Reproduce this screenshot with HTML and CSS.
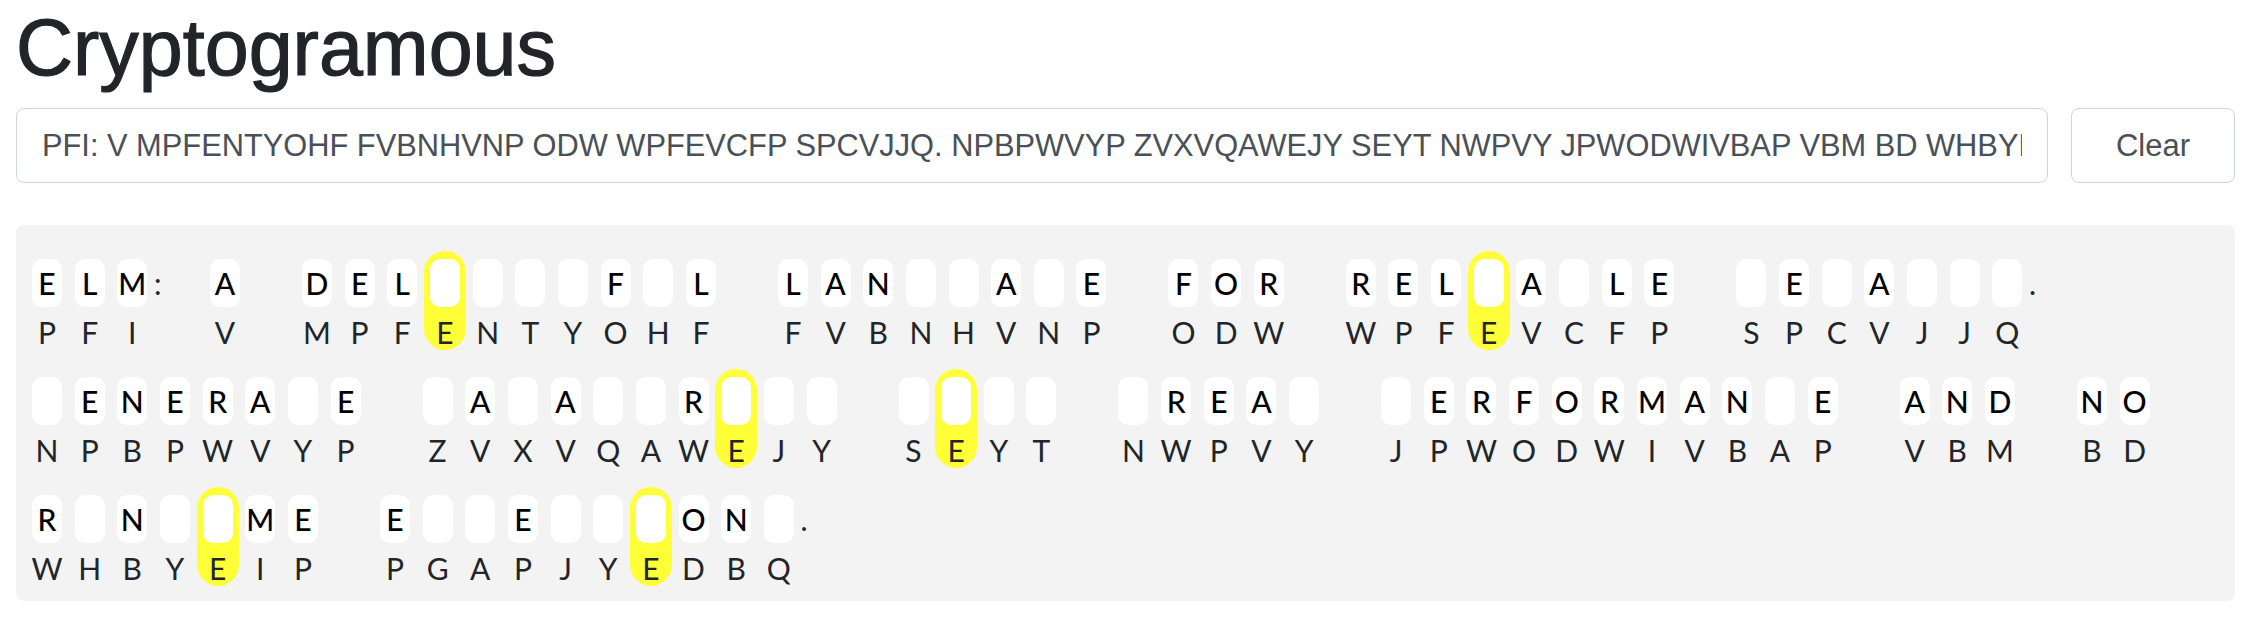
FILE: index.html
```html
<!DOCTYPE html>
<html lang="en">
<head>
<meta charset="utf-8">
<title>Cryptogramous</title>
<link rel="stylesheet" href="styles.css">
</head>
<body>
<div class="page">
  <h1 class="title">Cryptogramous</h1>
  <div class="controls">
    <input class="cipher-input" type="text" value="PFI: V MPFENTYOHF FVBNHVNP ODW WPFEVCFP SPCVJJQ. NPBPWVYP ZVXVQAWEJY SEYT NWPVY JPWODWIVBAP VBM BD WHBYEIP PGAPJYEDBQ.">
    <button class="clear-btn" type="button">Clear</button>
  </div>
  <div class="board">
    <div class="word">
      <div class="cell"><div class="guess">E</div><div class="code">P</div></div>
      <div class="cell"><div class="guess">L</div><div class="code">F</div></div>
      <div class="cell"><div class="guess">M</div><div class="code">I</div></div>
      <div class="punct">:</div>
    </div>
    <div class="word">
      <div class="cell"><div class="guess">A</div><div class="code">V</div></div>
    </div>
    <div class="word">
      <div class="cell"><div class="guess">D</div><div class="code">M</div></div>
      <div class="cell"><div class="guess">E</div><div class="code">P</div></div>
      <div class="cell"><div class="guess">L</div><div class="code">F</div></div>
      <div class="cell sel"><div class="guess"></div><div class="code">E</div></div>
      <div class="cell"><div class="guess"></div><div class="code">N</div></div>
      <div class="cell"><div class="guess"></div><div class="code">T</div></div>
      <div class="cell"><div class="guess"></div><div class="code">Y</div></div>
      <div class="cell"><div class="guess">F</div><div class="code">O</div></div>
      <div class="cell"><div class="guess"></div><div class="code">H</div></div>
      <div class="cell"><div class="guess">L</div><div class="code">F</div></div>
    </div>
    <div class="word">
      <div class="cell"><div class="guess">L</div><div class="code">F</div></div>
      <div class="cell"><div class="guess">A</div><div class="code">V</div></div>
      <div class="cell"><div class="guess">N</div><div class="code">B</div></div>
      <div class="cell"><div class="guess"></div><div class="code">N</div></div>
      <div class="cell"><div class="guess"></div><div class="code">H</div></div>
      <div class="cell"><div class="guess">A</div><div class="code">V</div></div>
      <div class="cell"><div class="guess"></div><div class="code">N</div></div>
      <div class="cell"><div class="guess">E</div><div class="code">P</div></div>
    </div>
    <div class="word">
      <div class="cell"><div class="guess">F</div><div class="code">O</div></div>
      <div class="cell"><div class="guess">O</div><div class="code">D</div></div>
      <div class="cell"><div class="guess">R</div><div class="code">W</div></div>
    </div>
    <div class="word">
      <div class="cell"><div class="guess">R</div><div class="code">W</div></div>
      <div class="cell"><div class="guess">E</div><div class="code">P</div></div>
      <div class="cell"><div class="guess">L</div><div class="code">F</div></div>
      <div class="cell sel"><div class="guess"></div><div class="code">E</div></div>
      <div class="cell"><div class="guess">A</div><div class="code">V</div></div>
      <div class="cell"><div class="guess"></div><div class="code">C</div></div>
      <div class="cell"><div class="guess">L</div><div class="code">F</div></div>
      <div class="cell"><div class="guess">E</div><div class="code">P</div></div>
    </div>
    <div class="word">
      <div class="cell"><div class="guess"></div><div class="code">S</div></div>
      <div class="cell"><div class="guess">E</div><div class="code">P</div></div>
      <div class="cell"><div class="guess"></div><div class="code">C</div></div>
      <div class="cell"><div class="guess">A</div><div class="code">V</div></div>
      <div class="cell"><div class="guess"></div><div class="code">J</div></div>
      <div class="cell"><div class="guess"></div><div class="code">J</div></div>
      <div class="cell"><div class="guess"></div><div class="code">Q</div></div>
      <div class="punct">.</div>
    </div>
    <div class="word">
      <div class="cell"><div class="guess"></div><div class="code">N</div></div>
      <div class="cell"><div class="guess">E</div><div class="code">P</div></div>
      <div class="cell"><div class="guess">N</div><div class="code">B</div></div>
      <div class="cell"><div class="guess">E</div><div class="code">P</div></div>
      <div class="cell"><div class="guess">R</div><div class="code">W</div></div>
      <div class="cell"><div class="guess">A</div><div class="code">V</div></div>
      <div class="cell"><div class="guess"></div><div class="code">Y</div></div>
      <div class="cell"><div class="guess">E</div><div class="code">P</div></div>
    </div>
    <div class="word">
      <div class="cell"><div class="guess"></div><div class="code">Z</div></div>
      <div class="cell"><div class="guess">A</div><div class="code">V</div></div>
      <div class="cell"><div class="guess"></div><div class="code">X</div></div>
      <div class="cell"><div class="guess">A</div><div class="code">V</div></div>
      <div class="cell"><div class="guess"></div><div class="code">Q</div></div>
      <div class="cell"><div class="guess"></div><div class="code">A</div></div>
      <div class="cell"><div class="guess">R</div><div class="code">W</div></div>
      <div class="cell sel"><div class="guess"></div><div class="code">E</div></div>
      <div class="cell"><div class="guess"></div><div class="code">J</div></div>
      <div class="cell"><div class="guess"></div><div class="code">Y</div></div>
    </div>
    <div class="word">
      <div class="cell"><div class="guess"></div><div class="code">S</div></div>
      <div class="cell sel"><div class="guess"></div><div class="code">E</div></div>
      <div class="cell"><div class="guess"></div><div class="code">Y</div></div>
      <div class="cell"><div class="guess"></div><div class="code">T</div></div>
    </div>
    <div class="word">
      <div class="cell"><div class="guess"></div><div class="code">N</div></div>
      <div class="cell"><div class="guess">R</div><div class="code">W</div></div>
      <div class="cell"><div class="guess">E</div><div class="code">P</div></div>
      <div class="cell"><div class="guess">A</div><div class="code">V</div></div>
      <div class="cell"><div class="guess"></div><div class="code">Y</div></div>
    </div>
    <div class="word">
      <div class="cell"><div class="guess"></div><div class="code">J</div></div>
      <div class="cell"><div class="guess">E</div><div class="code">P</div></div>
      <div class="cell"><div class="guess">R</div><div class="code">W</div></div>
      <div class="cell"><div class="guess">F</div><div class="code">O</div></div>
      <div class="cell"><div class="guess">O</div><div class="code">D</div></div>
      <div class="cell"><div class="guess">R</div><div class="code">W</div></div>
      <div class="cell"><div class="guess">M</div><div class="code">I</div></div>
      <div class="cell"><div class="guess">A</div><div class="code">V</div></div>
      <div class="cell"><div class="guess">N</div><div class="code">B</div></div>
      <div class="cell"><div class="guess"></div><div class="code">A</div></div>
      <div class="cell"><div class="guess">E</div><div class="code">P</div></div>
    </div>
    <div class="word">
      <div class="cell"><div class="guess">A</div><div class="code">V</div></div>
      <div class="cell"><div class="guess">N</div><div class="code">B</div></div>
      <div class="cell"><div class="guess">D</div><div class="code">M</div></div>
    </div>
    <div class="word">
      <div class="cell"><div class="guess">N</div><div class="code">B</div></div>
      <div class="cell"><div class="guess">O</div><div class="code">D</div></div>
    </div>
    <div class="word">
      <div class="cell"><div class="guess">R</div><div class="code">W</div></div>
      <div class="cell"><div class="guess"></div><div class="code">H</div></div>
      <div class="cell"><div class="guess">N</div><div class="code">B</div></div>
      <div class="cell"><div class="guess"></div><div class="code">Y</div></div>
      <div class="cell sel"><div class="guess"></div><div class="code">E</div></div>
      <div class="cell"><div class="guess">M</div><div class="code">I</div></div>
      <div class="cell"><div class="guess">E</div><div class="code">P</div></div>
    </div>
    <div class="word">
      <div class="cell"><div class="guess">E</div><div class="code">P</div></div>
      <div class="cell"><div class="guess"></div><div class="code">G</div></div>
      <div class="cell"><div class="guess"></div><div class="code">A</div></div>
      <div class="cell"><div class="guess">E</div><div class="code">P</div></div>
      <div class="cell"><div class="guess"></div><div class="code">J</div></div>
      <div class="cell"><div class="guess"></div><div class="code">Y</div></div>
      <div class="cell sel"><div class="guess"></div><div class="code">E</div></div>
      <div class="cell"><div class="guess">O</div><div class="code">D</div></div>
      <div class="cell"><div class="guess">N</div><div class="code">B</div></div>
      <div class="cell"><div class="guess"></div><div class="code">Q</div></div>
      <div class="punct">.</div>
    </div>
  </div>
</div>
</body>
</html>
```

FILE: styles.css
```css
body {
  margin: 0;
  background: #ffffff;
  color: #212529;
  font-family: "Liberation Sans", Arial, sans-serif;
}

.page {
  padding: 0 25px 0 16px;
}

.title {
  margin: 0;
  font-size: 79px;
  line-height: 96px;
  font-weight: 400;
  color: #212529;
  -webkit-text-stroke: 1.2px #212529;
}

.controls {
  display: flex;
  gap: 23px;
  margin-top: 12px;
}

.cipher-input {
  flex: 1;
  min-width: 0;
  height: 75px;
  box-sizing: border-box;
  border: 1px solid #ced4da;
  border-radius: 8px;
  padding: 0 25px;
  font-family: "Liberation Sans", Arial, sans-serif;
  font-size: 30.8px;
  color: #495057;
  background: #ffffff;
  outline: none;
}

.clear-btn {
  width: 164px;
  height: 75px;
  box-sizing: border-box;
  border: 1px solid #ced4da;
  border-radius: 8px;
  background: #ffffff;
  font-family: "Liberation Sans", Arial, sans-serif;
  font-size: 31px;
  color: #495057;
  padding: 0;
}

.board {
  margin-top: 42px;
  background: #f3f3f3;
  border-radius: 8px;
  padding: 26px 10px 15px;
  display: flex;
  flex-wrap: wrap;
  column-gap: 50px;
  row-gap: 19px;
}

.word {
  display: flex;
  gap: 0.67px;
}

.cell {
  display: flex;
  flex-direction: column;
  align-items: center;
  width: 42px;
  box-sizing: border-box;
  padding: 8px 6px 7px;
  border-radius: 21px;
  font-family: Lato, "Open Sans", sans-serif;
  font-size: 30px;
}

.cell.sel {
  background: #ffff38;
}

.guess {
  width: 30px;
  height: 48px;
  background: #ffffff;
  border-radius: 10px;
  color: #000000;
  font-weight: 500;
  text-align: center;
  line-height: 48px;
}

.code {
  margin-top: 14px;
  height: 22px;
  line-height: 22px;
  color: #212529;
  text-align: center;
}

.punct {
  width: 0;
  padding-top: 8px;
  line-height: 48px;
  font-family: Lato, "Open Sans", sans-serif;
  font-size: 30px;
  color: #212529;
  white-space: nowrap;
}
```
